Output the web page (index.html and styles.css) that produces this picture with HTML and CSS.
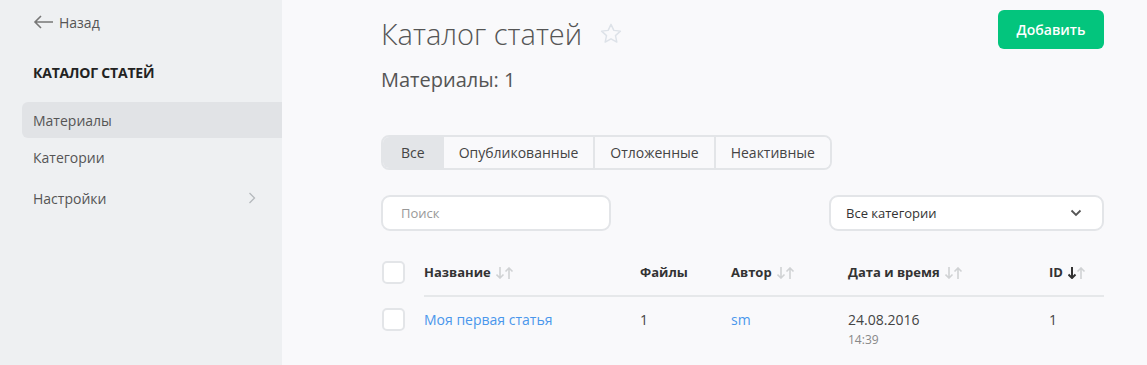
FILE: index.html
```html
<!DOCTYPE html>
<html>
<head>
<meta charset="utf-8">
<meta name="viewport" content="width=device-width, initial-scale=1">
<link rel="stylesheet" href="styles.css">
</head>
<body>

<aside class="sidebar">
  <a class="back" href="#">
    <svg width="21" height="14" viewBox="0 0 21 14"><path d="M20 7H2M8 1L2 7l6 6" fill="none" stroke="#777" stroke-width="1.6"/></svg>
    Назад
  </a>
  <div class="side-title">КАТАЛОГ СТАТЕЙ</div>
  <nav class="menu">
    <a class="menu-item active" href="#">Материалы</a>
    <a class="menu-item" href="#">Категории</a>
    <a class="menu-item" href="#">Настройки
      <svg class="chev" width="8" height="12" viewBox="0 0 8 12"><path d="M1.5 1l5 5-5 5" fill="none" stroke="#b5b9bd" stroke-width="1.3"/></svg>
    </a>
  </nav>
</aside>

<main class="main">
  <div class="top">
    <div>
      <h1 class="title">Каталог статей
        <svg class="star" width="22" height="21" viewBox="0 0 24 23"><path d="M12 1.5l3.1 6.6 7.2.8-5.4 4.9 1.5 7.1L12 17.3l-6.4 3.6 1.5-7.1-5.4-4.9 7.2-.8z" fill="none" stroke="#dde2e8" stroke-width="1.6" stroke-linejoin="round"/></svg>
      </h1>
      <div class="count">Материалы: 1</div>
    </div>
    <button class="btn">Добавить</button>
  </div>

  <div class="tabs">
    <span class="tab active">Все</span>
    <span class="tab">Опубликованные</span>
    <span class="tab">Отложенные</span>
    <span class="tab">Неактивные</span>
  </div>

  <div class="filters">
    <input class="search" type="text" placeholder="Поиск">
    <div class="select">Все категории
      <svg width="12" height="8" viewBox="0 0 12 8"><path d="M1.5 1.5L6 6l4.5-4.5" fill="none" stroke="#555" stroke-width="1.8"/></svg>
    </div>
  </div>

  <div class="grid">
    <div class="cell check-cell"><span class="check"></span></div>
    <div class="cell head">Название
      <svg class="sort" width="18" height="12" viewBox="0 0 18 12"><path d="M4 0v11M0.5 7.5L4 11l3.5-3.5M13 12V1M9.5 4.5L13 1l3.5 3.5" fill="none" stroke="#d0d2d4" stroke-width="1.6"/></svg>
    </div>
    <div class="cell head">Файлы</div>
    <div class="cell head">Автор
      <svg class="sort" width="18" height="12" viewBox="0 0 18 12"><path d="M4 0v11M0.5 7.5L4 11l3.5-3.5M13 12V1M9.5 4.5L13 1l3.5 3.5" fill="none" stroke="#d0d2d4" stroke-width="1.6"/></svg>
    </div>
    <div class="cell head">Дата и время
      <svg class="sort" width="18" height="12" viewBox="0 0 18 12"><path d="M4 0v11M0.5 7.5L4 11l3.5-3.5M13 12V1M9.5 4.5L13 1l3.5 3.5" fill="none" stroke="#d0d2d4" stroke-width="1.6"/></svg>
    </div>
    <div class="cell head">ID
      <svg class="sort" width="18" height="12" viewBox="0 0 18 12"><path d="M4 0v11M0.5 7.5L4 11l3.5-3.5" fill="none" stroke="#333" stroke-width="2"/><path d="M13 12V1M9.5 4.5L13 1l3.5 3.5" fill="none" stroke="#d0d2d4" stroke-width="1.6"/></svg>
    </div>

    <div class="cell check-cell row-check"><span class="check"></span></div>
    <div class="cell row"><a class="link" href="#">Моя первая статья</a></div>
    <div class="cell row">1</div>
    <div class="cell row"><a class="link" href="#">sm</a></div>
    <div class="cell row">24.08.2016<div class="time">14:39</div></div>
    <div class="cell row">1</div>
  </div>
</main>

</body>
</html>
```
FILE: styles.css
```css
* {
  box-sizing: border-box;
}

body, html {
  margin: 0;
  height: 100%;
}

body {
  display: flex;
  font-family: "Open Sans", "Noto Sans", Arial, sans-serif;
  font-size: 14px;
  color: #333;
  background: #f9f9fb;
}

a {
  text-decoration: none;
  color: inherit;
}

/* Sidebar */
.sidebar {
  width: 282px;
  flex-shrink: 0;
  background: #eef0f2;
  padding: 12px 0 0 22px;
}

.back {
  display: flex;
  align-items: center;
  gap: 5px;
  margin-left: 11px;
  height: 20px;
  color: #555;
}

.side-title {
  margin: 31px 0 0 11px;
  font-weight: 700;
  font-size: 14px;
  color: #222;
  letter-spacing: -0.2px;
}

.menu {
  margin-top: 20px;
}

.menu-item {
  display: flex;
  align-items: center;
  justify-content: space-between;
  height: 36px;
  padding: 0 26px 0 11px;
  color: #555;
  border-radius: 6px 0 0 6px;
}

.menu-item + .menu-item {
  margin-top: 1px;
}

.menu-item:last-child {
  margin-top: 5px;
}

.menu-item.active {
  background: #e1e3e6;
}

/* Main area */
.main {
  flex: 1;
  padding: 10px 43px 0 99px;
}

.top {
  display: flex;
  justify-content: space-between;
  align-items: flex-start;
}

.title {
  margin: 4px 0 0;
  font-size: 29px;
  font-weight: 300;
  color: #555;
  display: flex;
  align-items: center;
  gap: 18px;
}

.count {
  margin-top: 13px;
  font-size: 20px;
  color: #555;
}

.btn {
  width: 106px;
  height: 39px;
  border: none;
  border-radius: 6px;
  background: #03c57d;
  color: #fff;
  font-family: inherit;
  font-size: 14px;
  font-weight: 600;
}

/* Tabs */
.tabs {
  display: inline-flex;
  margin-top: 42px;
  border: 2px solid #e3e5e8;
  border-radius: 8px;
  overflow: hidden;
  height: 35px;
}

.tab {
  display: flex;
  align-items: center;
  padding: 0 15px;
  color: #444;
  background: #f9f9fb;
}

.tab + .tab {
  border-left: 2px solid #e3e5e8;
}

.tab.active {
  background: #e3e5e8;
  padding: 0 17px 0 18px;
}

/* Filters */
.filters {
  display: flex;
  justify-content: space-between;
  margin-top: 25px;
}

.search, .select {
  height: 36px;
  border: 2px solid #e3e5e8;
  border-radius: 9px;
  background: #fff;
  font-family: inherit;
  font-size: 13px;
}

.search {
  width: 230px;
  padding: 0 18px;
  outline: none;
}

.search::placeholder {
  color: #999;
}

.select {
  width: 275px;
  display: flex;
  align-items: center;
  justify-content: space-between;
  padding: 0 20px 0 15px;
  color: #333;
}

/* Table */
.grid {
  display: grid;
  grid-template-columns: 43px 216px 91px 117px 201px 55px;
  margin-top: 30px;
}

.cell {
  display: flex;
  align-items: flex-start;
  line-height: 23px;
}

.check-cell {
  padding-left: 1px;
  height: 36px;
}

.check {
  width: 23px;
  height: 23px;
  border: 2px solid #e3e5e8;
  border-radius: 5px;
  background: #fff;
}

.head {
  height: 36px;
  font-weight: 700;
  font-size: 13px;
  color: #333;
  border-bottom: 2px solid #e6e8ea;
}

.sort {
  margin: 6px 0 0 5px;
}

.row, .row-check {
  height: auto;
  padding-top: 11px;
  color: #444;
}

.row {
  flex-direction: column;
}

.link {
  color: #4a97ec;
}

.time {
  font-size: 12px;
  line-height: 14px;
  margin-top: 2px;
  color: #888;
}
```
